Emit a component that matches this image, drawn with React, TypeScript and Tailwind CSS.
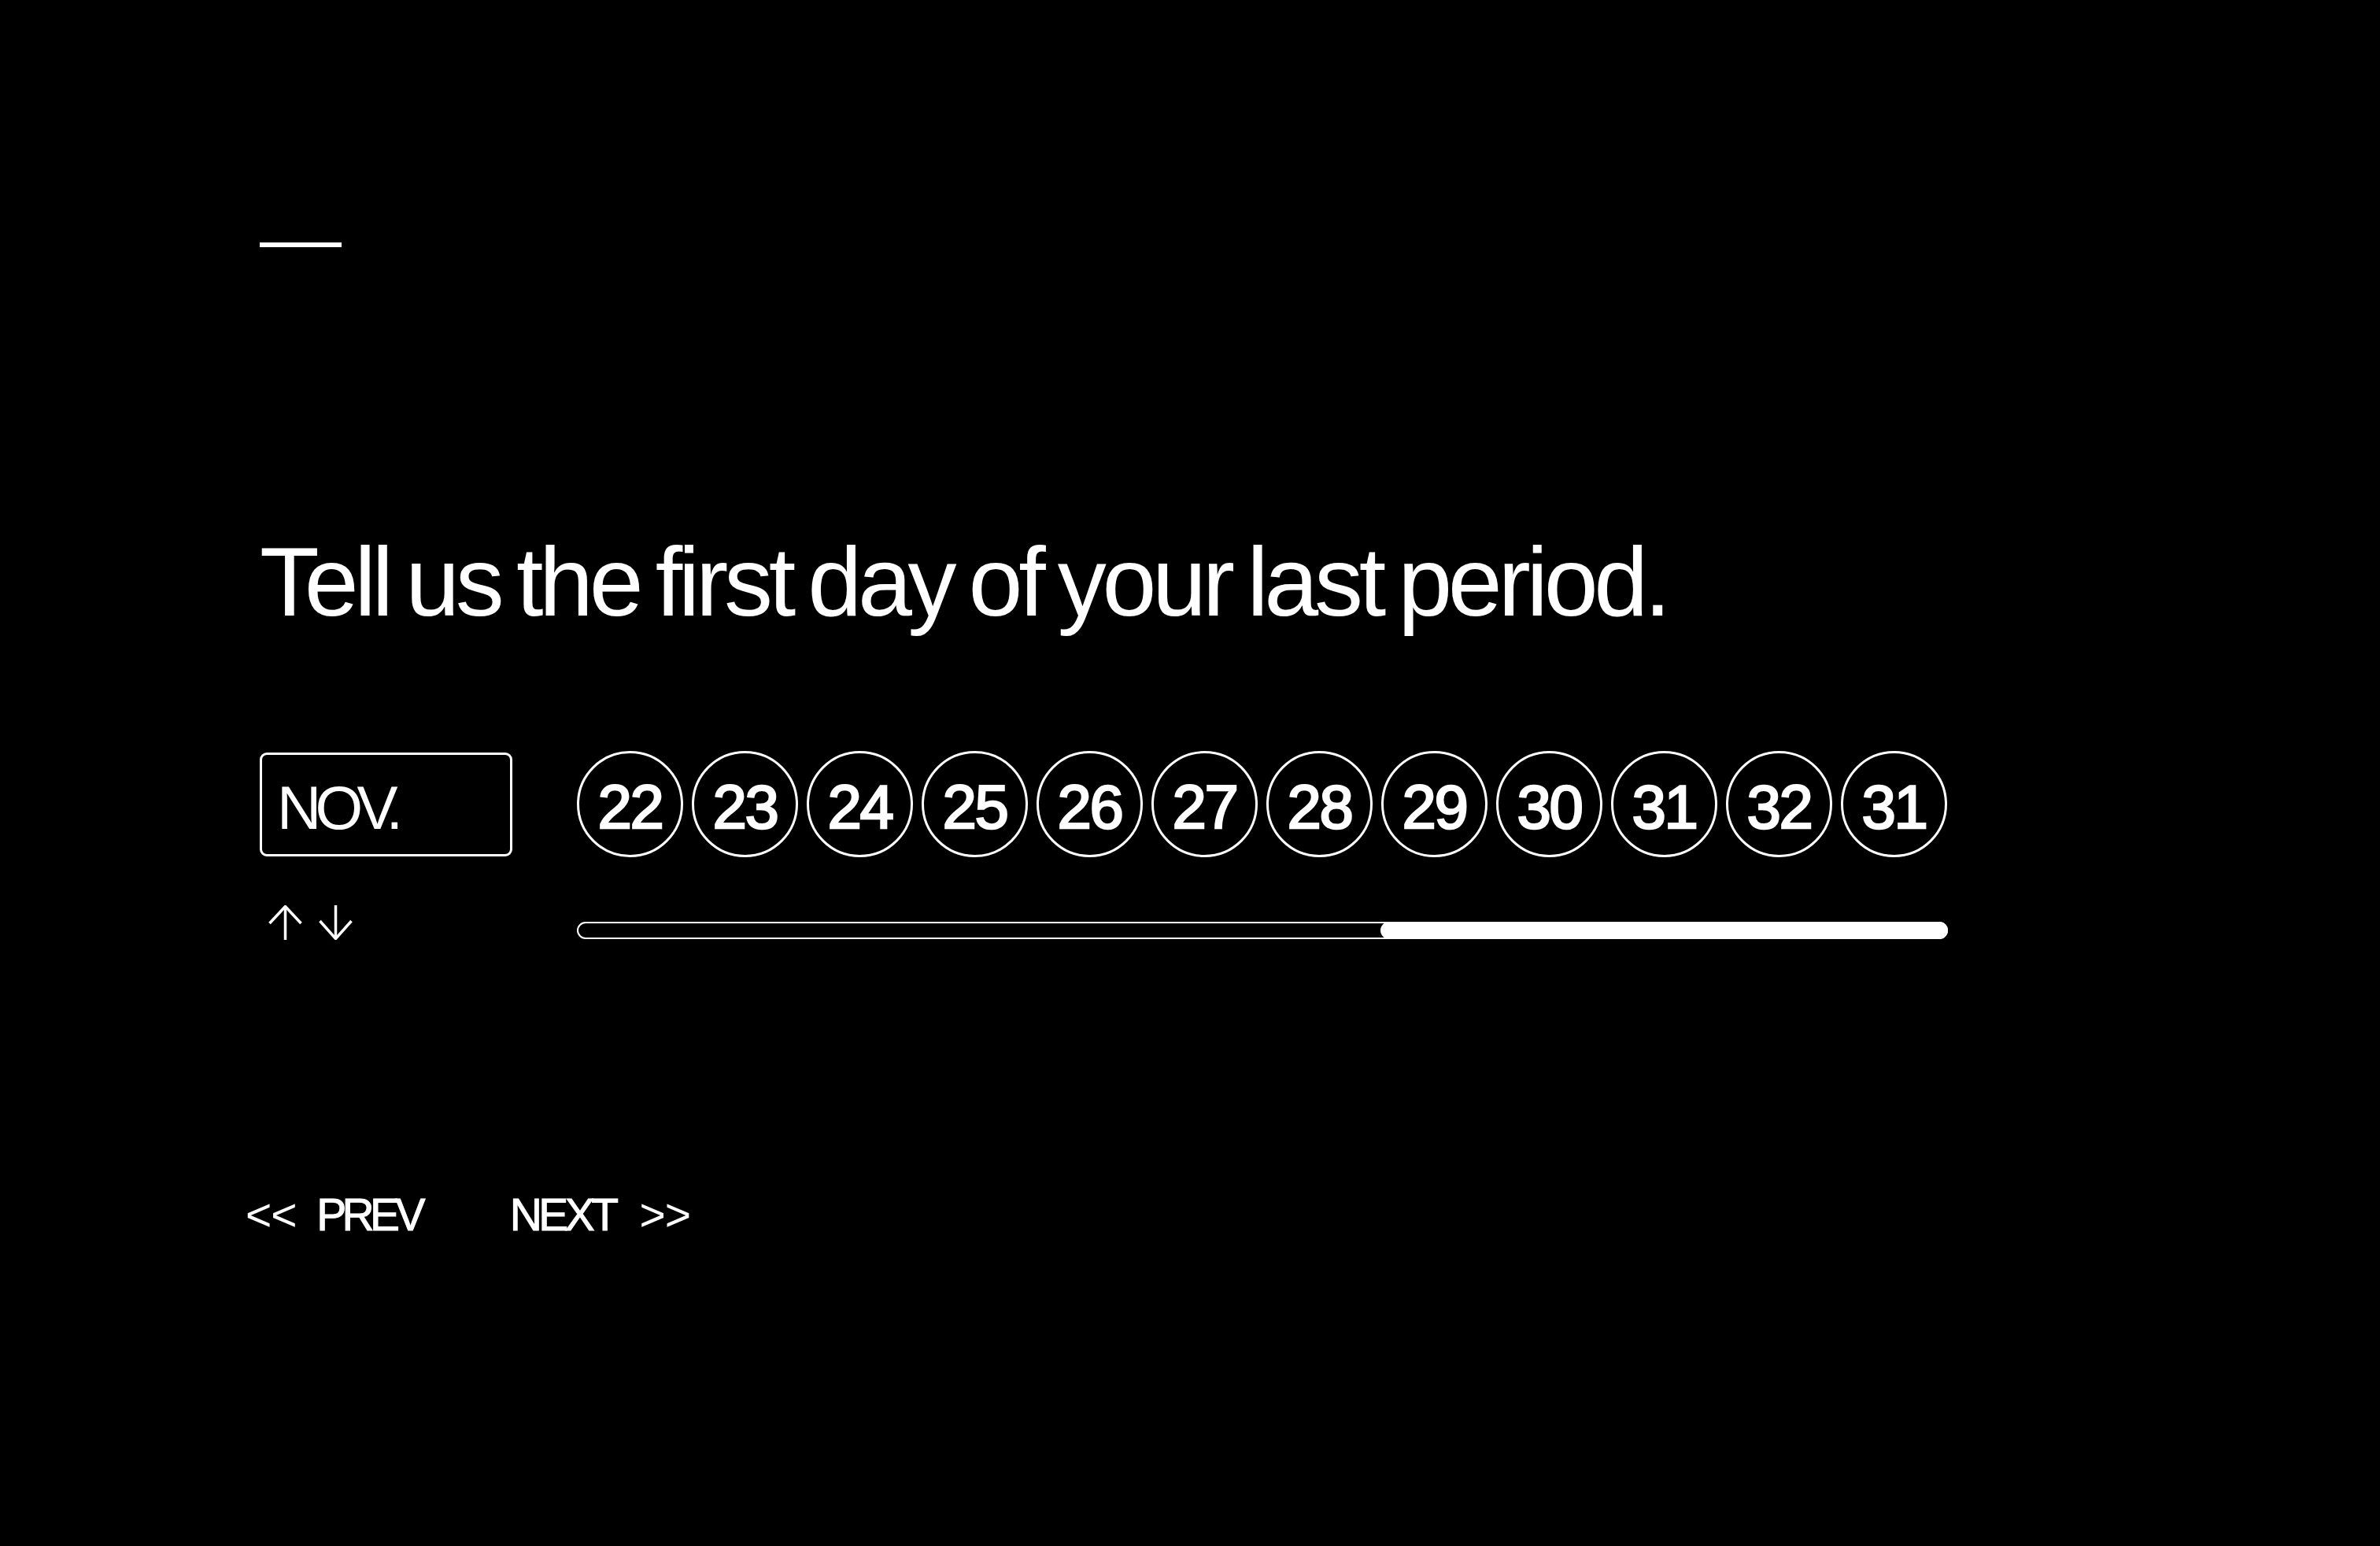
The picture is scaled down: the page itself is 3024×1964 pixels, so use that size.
import React from "react";

const days = [22, 23, 24, 25, 26, 27, 28, 29, 30, 31, 32, 31];

const ArrowUp = () => (
  <svg width="44" height="44" viewBox="0 0 44 44" fill="none" stroke="white" strokeWidth="3.5">
    <path d="M1.5 23 L21.5 1.5 L41.5 23" />
    <path d="M21.5 2 V44" />
  </svg>
);

const ArrowDown = () => (
  <svg width="44" height="44" viewBox="0 0 44 44" fill="none" stroke="white" strokeWidth="3.5">
    <path d="M1.5 20 L21.5 42.5 L41.5 20" />
    <path d="M21.5 0 V42" />
  </svg>
);

const App: React.FC = () => {
  return (
    <div className="min-h-screen bg-black text-white font-['Liberation_Sans',Arial,sans-serif] pl-[330px] pt-[308px] pb-[200px]">
      <div className="h-[6px] w-[104px] bg-white" />

      <h1 className="mt-[363px] text-[124px] leading-none font-normal tracking-[-0.043em] [word-spacing:-0.07em] whitespace-nowrap">
        Tell us the first day of your last period.
      </h1>

      <div className="mt-[153px] grid grid-cols-[321px_1742px] gap-x-[82px] gap-y-[61px] items-center">
        <div className="h-[132px] w-[321px] border-[3px] border-white rounded-[9px] flex items-center pl-[19px] pt-[8px]">
          <span className="text-[78px] leading-none tracking-[-0.1em]">NOV.</span>
        </div>

        <div className="flex gap-[11px]">
          {days.map((d, i) => (
            <button
              key={i}
              className="h-[135px] w-[135px] shrink-0 rounded-full border-[3px] border-white flex items-center justify-center pt-[7px] text-[78px] leading-none font-normal tracking-[-0.03em] [-webkit-text-stroke:2.5px_white]"
            >
              {d}
            </button>
          ))}
        </div>

        <div className="self-start ml-[11px] flex gap-[20px]">
          <ArrowUp />
          <ArrowDown />
        </div>

        <div className="self-start mt-[21px] h-[22px] w-full rounded-full border-2 border-white flex justify-end">
          <div className="h-[22px] -my-[2px] -mr-[2px] w-[41.5%] rounded-full bg-white" />
        </div>
      </div>

      <nav className="mt-[321px] -ml-[18px] flex items-baseline text-[57px] leading-none">
        <button className="flex items-baseline gap-[26px]">
          <span className="tracking-[-0.02em]">&lt;&lt;</span>
          <span className="tracking-[-0.1em] [-webkit-text-stroke:1px_white]">PREV</span>
        </button>
        <button className="ml-[113px] flex items-baseline gap-[31px]">
          <span className="tracking-[-0.08em] [-webkit-text-stroke:1px_white]">NEXT</span>
          <span className="tracking-[-0.02em]">&gt;&gt;</span>
        </button>
      </nav>
    </div>
  );
};

export default App;
